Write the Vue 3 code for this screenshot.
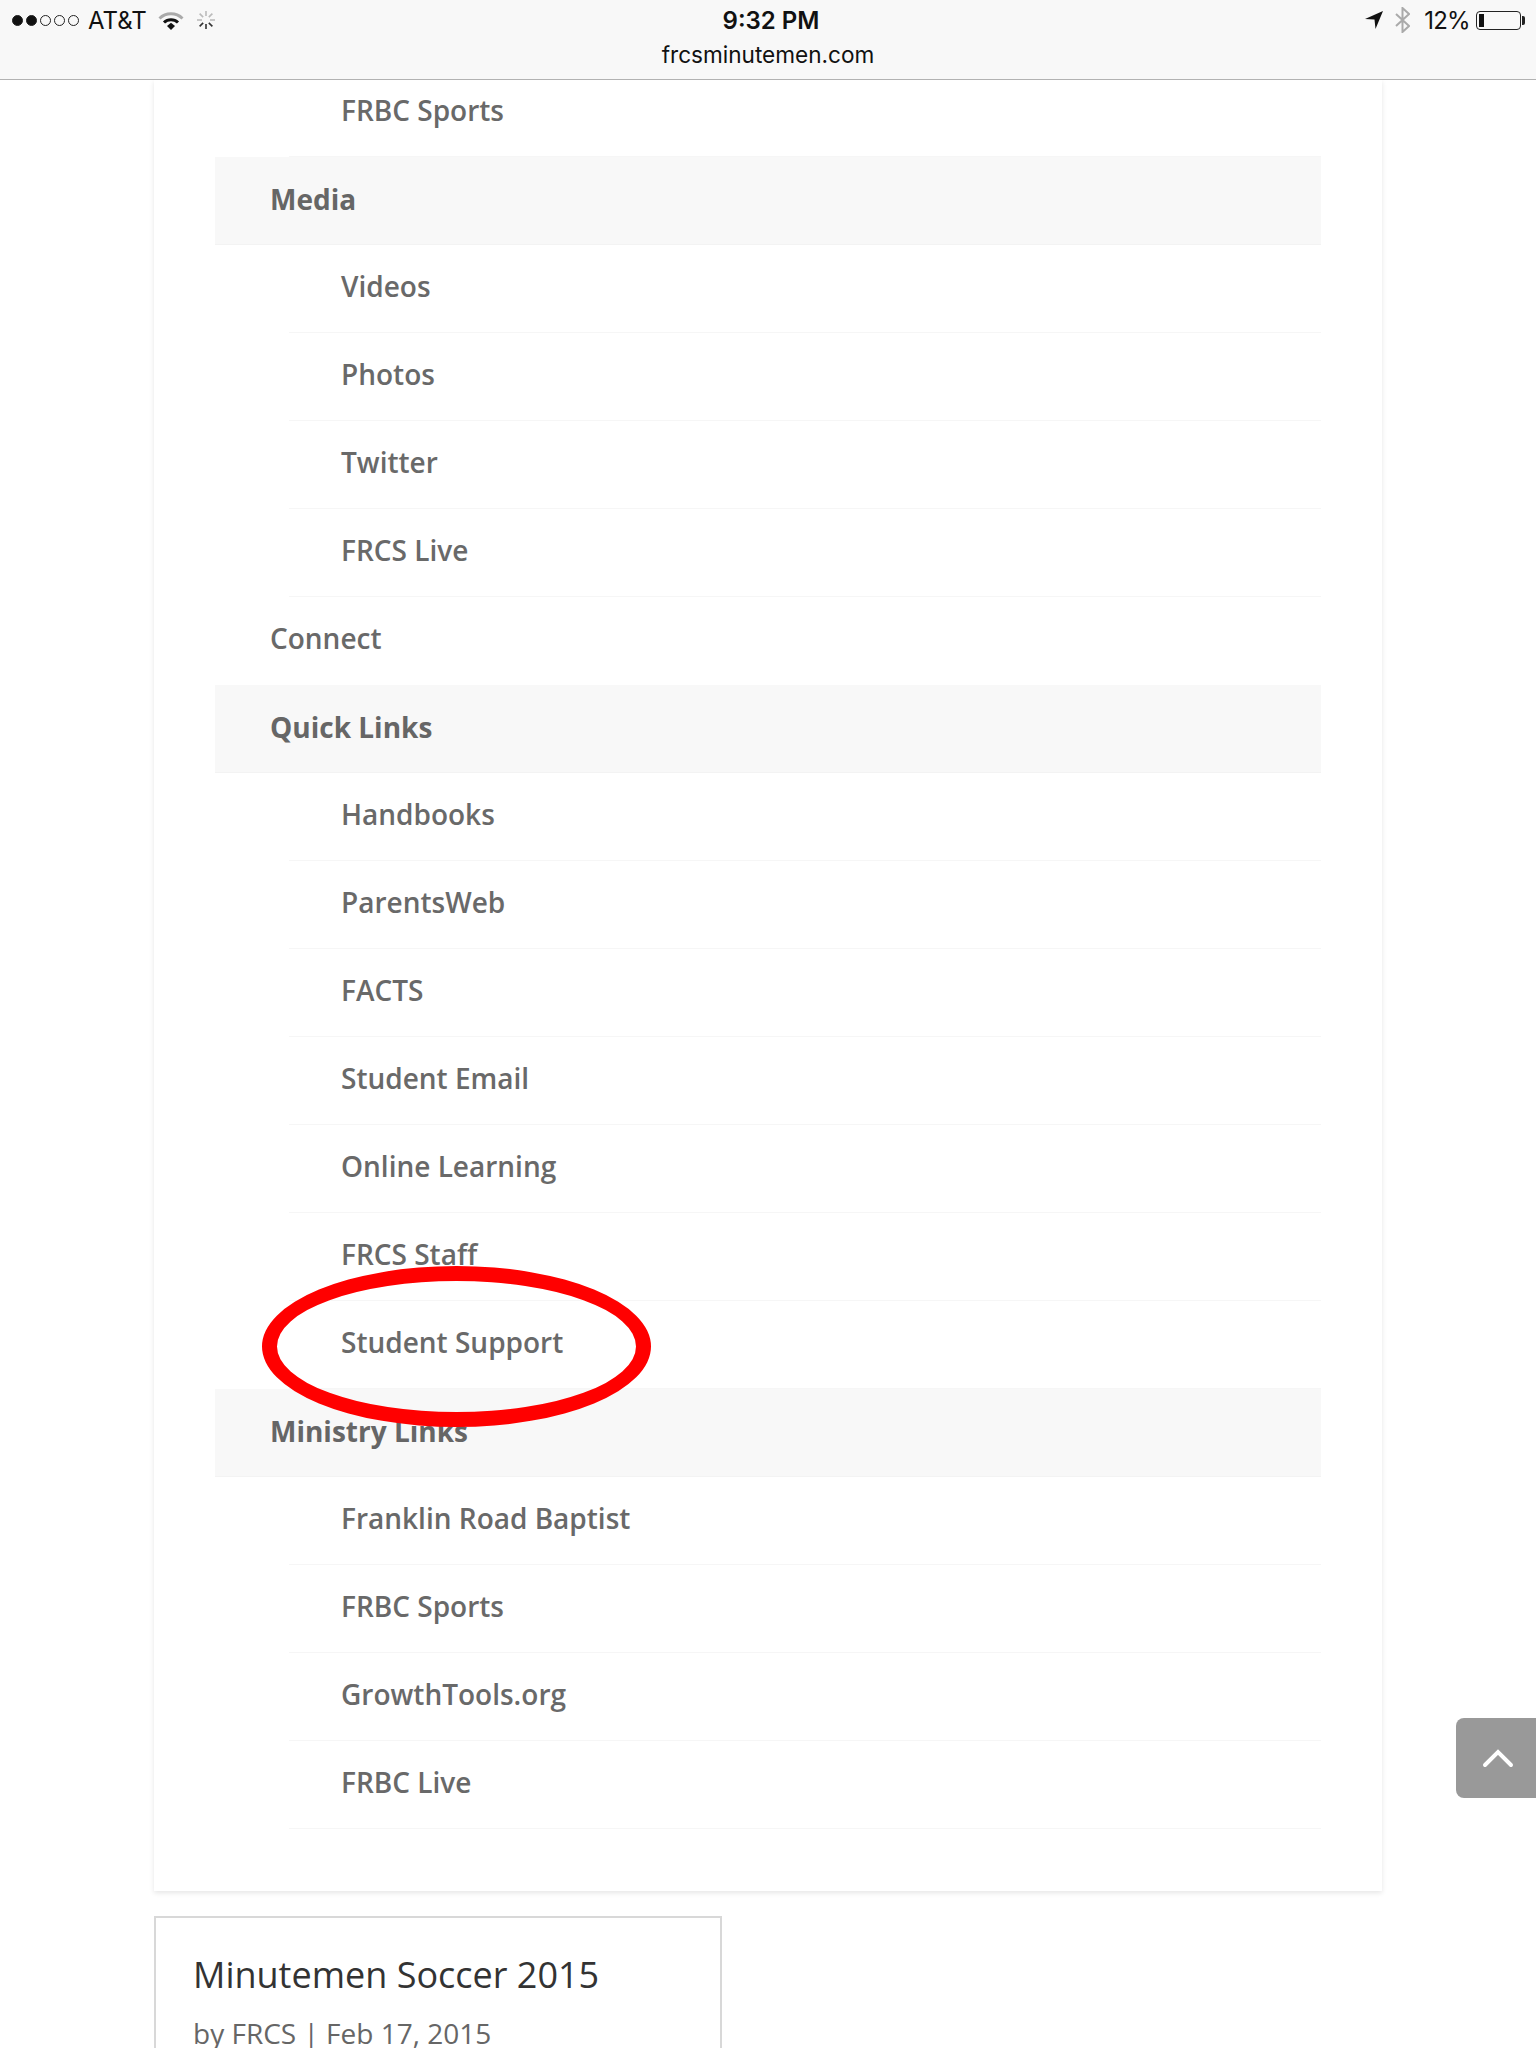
<script setup>
const sections = [
  { items: ["FRBC Sports"] },
  { title: "Media", items: ["Videos", "Photos", "Twitter", "FRCS Live"] },
  { title: "Connect", plain: true, items: [] },
  {
    title: "Quick Links",
    items: ["Handbooks", "ParentsWeb", "FACTS", "Student Email", "Online Learning", "FRCS Staff", "Student Support"],
  },
  { title: "Ministry Links", items: ["Franklin Road Baptist", "FRBC Sports", "GrowthTools.org", "FRBC Live"] },
];

const signal = [true, true, false, false, false];
const spokes = [0, 45, 90, 135, 180, 225, 270, 315];
</script>

<template>
  <div class="page">
    <header class="status">
      <div class="status-left">
        <span class="signal">
          <i v-for="(on, i) in signal" :key="i" :class="{ on }"></i>
        </span>
        <span class="carrier">AT&amp;T</span>
        <svg class="wifi" width="26" height="19" viewBox="0 0 26 19">
          <path d="M1.5 7.5a16.5 16.5 0 0 1 23 0" fill="none" stroke="#aaa" stroke-width="3" />
          <path d="M6 11.5a10 10 0 0 1 14 0" fill="none" stroke="#111" stroke-width="3" />
          <path d="M9 15l4-3.2 4 3.2-4 4z" fill="#111" />
        </svg>
        <svg class="spinner" width="20" height="20" viewBox="0 0 20 20">
          <line
            v-for="(deg, i) in spokes"
            :key="deg"
            x1="10"
            y1="1"
            x2="10"
            y2="6"
            stroke-width="1.6"
            :stroke="i > 2 && i < 6 ? '#333' : '#bbb'"
            :transform="`rotate(${deg} 10 10)`"
          />
        </svg>
      </div>
      <div class="status-mid">
        <span class="time">9:32 PM</span>
        <span class="url">frcsminutemen.com</span>
      </div>
      <div class="status-right">
        <svg width="18" height="18" viewBox="0 0 18 18">
          <path d="M0 8L18 0 10.5 18 9.5 8.5z" fill="#111" />
        </svg>
        <svg class="bt" width="15" height="26" viewBox="0 0 15 26">
          <path d="M1 7l13 12-6.5 6V1L14 7 1 19" fill="none" stroke="#aaa" stroke-width="2" />
        </svg>
        <span class="pct">12%</span>
        <span class="battery"><i></i></span>
      </div>
    </header>

    <main class="content">
      <nav class="menu-card">
        <ul class="menu">
          <template v-for="(s, i) in sections" :key="i">
            <li v-if="s.title" class="row" :class="s.plain ? 'plain' : 'head'">{{ s.title }}</li>
            <li v-for="item in s.items" :key="item" class="row sub">
              <span>{{ item }}</span>
            </li>
          </template>
        </ul>
      </nav>

      <article class="post">
        <h2>Minutemen Soccer 2015</h2>
        <p>by FRCS | Feb 17, 2015</p>
      </article>
    </main>

    <div class="circle"></div>

    <button class="to-top" type="button" aria-label="Back to top">
      <svg width="32" height="19" viewBox="0 0 32 19">
        <path d="M3 16L16 3l13 13" fill="none" stroke="#fff" stroke-width="4" stroke-linecap="round" />
      </svg>
    </button>
  </div>
</template>

<style>
html,
body {
  margin: 0;
  background: #fff;
}
</style>

<style scoped>
.page {
  position: relative;
  width: 1536px;
  height: 2048px;
  overflow: hidden;
  background: #fff;
  font-family: "Open Sans", sans-serif;
}

.status {
  position: relative;
  z-index: 2;
  display: grid;
  grid-template-columns: 1fr auto 1fr;
  height: 79px;
  background: #f8f8f8;
  border-bottom: 1px solid #b2b2b2;
  color: #111;
  font-family: Inter, "Liberation Sans", sans-serif;
}

.status-left,
.status-right {
  display: flex;
  align-items: center;
  height: 40px;
}

.status-left {
  padding-left: 12px;
}

.status-right {
  justify-content: flex-end;
  padding-right: 11px;
}

.signal {
  display: flex;
  gap: 3px;
}

.signal i {
  display: block;
  box-sizing: border-box;
  width: 11px;
  height: 11px;
  border: 1px solid #222;
  border-radius: 50%;
}

.signal i.on {
  background: #111;
}

.carrier {
  margin-left: 9px;
  font-size: 24px;
}

.wifi {
  margin-left: 11px;
}

.spinner {
  margin-left: 12px;
}

.status-mid {
  display: flex;
  flex-direction: column;
  align-items: center;
}

.time {
  margin-top: 6px;
  padding-left: 6px;
  font-size: 24px;
  line-height: 29px;
  font-weight: 600;
}

.url {
  margin-top: 6px;
  font-size: 22.6px;
  line-height: 28px;
}

.bt {
  margin-left: 12px;
}

.pct {
  margin-left: 14px;
  font-size: 24px;
  letter-spacing: -0.7px;
}

.battery {
  position: relative;
  box-sizing: border-box;
  width: 45px;
  height: 19px;
  margin-left: 6px;
  margin-right: 4px;
  padding: 2px;
  border: 1px solid #222;
  border-radius: 4px;
}

.battery i {
  display: block;
  width: 5px;
  height: 100%;
  background: #111;
}

.battery::after {
  content: "";
  position: absolute;
  top: 4px;
  right: -5px;
  width: 3px;
  height: 9px;
  background: #222;
  border-radius: 0 2px 2px 0;
}

.content {
  padding-left: 154px;
}

.menu-card {
  box-sizing: border-box;
  width: 1228px;
  height: 1811px;
  padding: 0 61px;
  background: #fff;
  box-shadow: 0 2px 5px rgba(0, 0, 0, 0.1);
  overflow: hidden;
}

.menu {
  margin: -11px 0 0;
  padding: 0;
  list-style: none;
}

.row {
  box-sizing: border-box;
  height: 88px;
  color: #696969;
  font-size: 28px;
  font-weight: 600;
  line-height: 83px;
  white-space: nowrap;
}

.head,
.plain {
  padding-left: 55px;
}

.head {
  background: #f8f8f8;
  border-bottom: 1px solid #f3f3f3;
  color: #666;
  font-weight: 700;
  line-height: 84px;
}

.sub {
  margin-left: 74px;
  padding-left: 52px;
  border-bottom: 1px solid #f6f6f6;
}

.post {
  box-sizing: border-box;
  width: 568px;
  height: 200px;
  margin-top: 25px;
  padding: 26px 37px;
  border: 2px solid #d8d8d8;
}

.post h2 {
  margin: 0;
  color: #333;
  font-size: 36px;
  font-weight: 400;
  line-height: 62px;
}

.post p {
  margin: 0;
  color: #666;
  font-size: 28px;
  line-height: 54px;
}

.circle {
  position: absolute;
  left: 262px;
  top: 1266px;
  box-sizing: border-box;
  width: 389px;
  height: 161px;
  border: 15px solid #ff0000;
  border-radius: 50%;
}

.to-top {
  position: absolute;
  right: 0;
  top: 1718px;
  display: flex;
  align-items: center;
  justify-content: center;
  width: 80px;
  height: 80px;
  padding: 0 0 0 4px;
  border: none;
  border-radius: 8px 0 0 8px;
  background: #999;
}
</style>
